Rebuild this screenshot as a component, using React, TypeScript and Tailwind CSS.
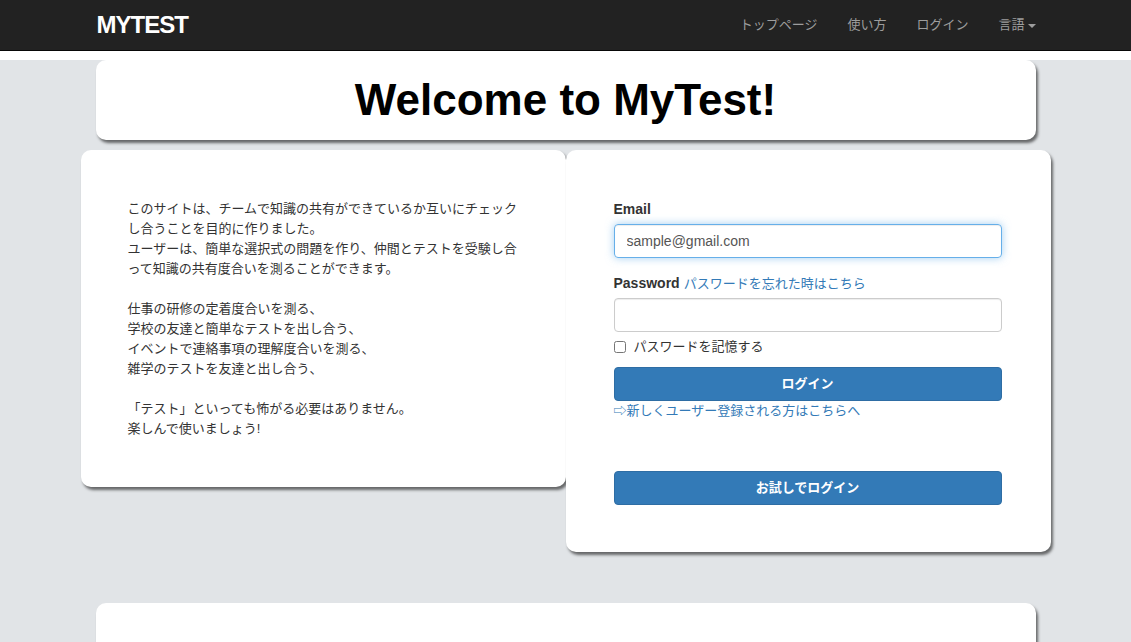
const jp = "font-['Liberation_Sans','Noto_Sans_CJK_JP',sans-serif]";

function Navbar() {
  return (
    <nav className="h-[51px] border-b border-[#080808] bg-[#222222]">
      <div className="mx-auto flex h-[50px] w-[970px] items-center justify-between px-[15px]">
        <a href="#" className="ml-[1px] text-[24px] font-bold tracking-[-1px] text-white">
          MYTEST
        </a>
        <ul className="-mr-[15px] flex text-[13px] text-[#9d9d9d]">
          <li><a href="#" className="block pl-[18px] pr-[15px] leading-[50px]">トップページ</a></li>
          <li><a href="#" className="block px-[15px] leading-[50px]">使い方</a></li>
          <li><a href="#" className="block px-[15px] leading-[50px]">ログイン</a></li>
          <li>
            <a href="#" className="flex items-center gap-[3px] px-[15px] leading-[50px]">
              言語
              <span className="mt-[1px] h-0 w-0 border-x-[4px] border-t-[4px] border-x-transparent border-t-[#9d9d9d]" />
            </a>
          </li>
        </ul>
      </div>
    </nav>
  );
}

const card = "rounded-[10px] bg-white shadow-[2px_3px_3px_rgba(0,0,0,0.55)]";

function About() {
  return (
    <div className={`${card} w-[485px] self-start px-[47px] pb-[48px] pt-[49px] text-[13px] leading-[20px] text-[#333]`}>
      <p>
        このサイトは、チームで知識の共有ができているか互いにチェック<br />
        し合うことを目的に作りました。<br />
        ユーザーは、簡単な選択式の問題を作り、仲間とテストを受験し合<br />
        って知識の共有度合いを測ることができます。
      </p>
      <p className="mt-[20px]">
        仕事の研修の定着度合いを測る、<br />
        学校の友達と簡単なテストを出し合う、<br />
        イベントで連絡事項の理解度合いを測る、<br />
        雑学のテストを友達と出し合う、
      </p>
      <p className="mt-[20px]">
        「テスト」といっても怖がる必要はありません。<br />
        楽しんで使いましょう!
      </p>
    </div>
  );
}

function LoginForm() {
  return (
    <div className={`${card} w-[485px] px-[48px] pb-[47px] pt-[49px] text-[14px] text-[#333]`}>
      <label className="block h-[20px] text-[14px] font-bold leading-[20px]">Email</label>
      <input
        defaultValue="sample@gmail.com"
        className="mt-[5px] block h-[34px] w-[388px] rounded-[4px] border border-[#66afe9] px-[12px] text-[14px] text-[#555] shadow-[inset_0_1px_1px_rgba(0,0,0,0.075),0_0_8px_rgba(102,175,233,0.6)] outline-none"
      />
      <div className="mt-[15px] flex h-[20px] items-baseline gap-[4px] leading-[20px]">
        <span className="font-bold">Password</span>
        <a href="#" className="text-[13px] text-[#337ab7]">パスワードを忘れた時はこちら</a>
      </div>
      <input
        type="password"
        className="mt-[5px] block h-[34px] w-[388px] rounded-[4px] border border-[#cccccc] px-[12px] shadow-[inset_0_1px_1px_rgba(0,0,0,0.075)] outline-none"
      />
      <label className="mt-[5px] flex h-[20px] items-center gap-[8px] text-[13px] leading-[20px]">
        <input type="checkbox" className="h-[12px] w-[12px]" />
        パスワードを記憶する
      </label>
      <button className="mt-[10px] block h-[34px] w-[388px] rounded-[4px] border border-[#2e6da4] bg-[#337ab7] text-[13px] font-bold text-white">
        ログイン
      </button>
      <a href="#" className="block h-[20px] text-[13px] leading-[20px] text-[#337ab7]">
        ⇨新しくユーザー登録される方はこちらへ
      </a>
      <button className="mt-[50px] block h-[34px] w-[388px] rounded-[4px] border border-[#2e6da4] bg-[#337ab7] text-[13px] font-bold text-white">
        お試しでログイン
      </button>
    </div>
  );
}

export default function App() {
  return (
    <div className={`min-h-[642px] bg-white ${jp}`}>
      <Navbar />
      <div className="mt-[9px] min-h-[582px] bg-[#e1e4e7] pb-[40px]">
        <div className="mx-auto w-[970px]">
          <div className="px-[15px]">
            <div className={`${card} flex h-[80px] items-center justify-center`}>
              <h1 className="text-[44px] font-bold leading-none text-black">Welcome to MyTest!</h1>
            </div>
          </div>
          <div className="mt-[10px] flex">
            <About />
            <LoginForm />
          </div>
          <div className="mt-[51px] px-[15px]">
            <div className={`${card} h-[200px]`} />
          </div>
        </div>
      </div>
    </div>
  );
}
